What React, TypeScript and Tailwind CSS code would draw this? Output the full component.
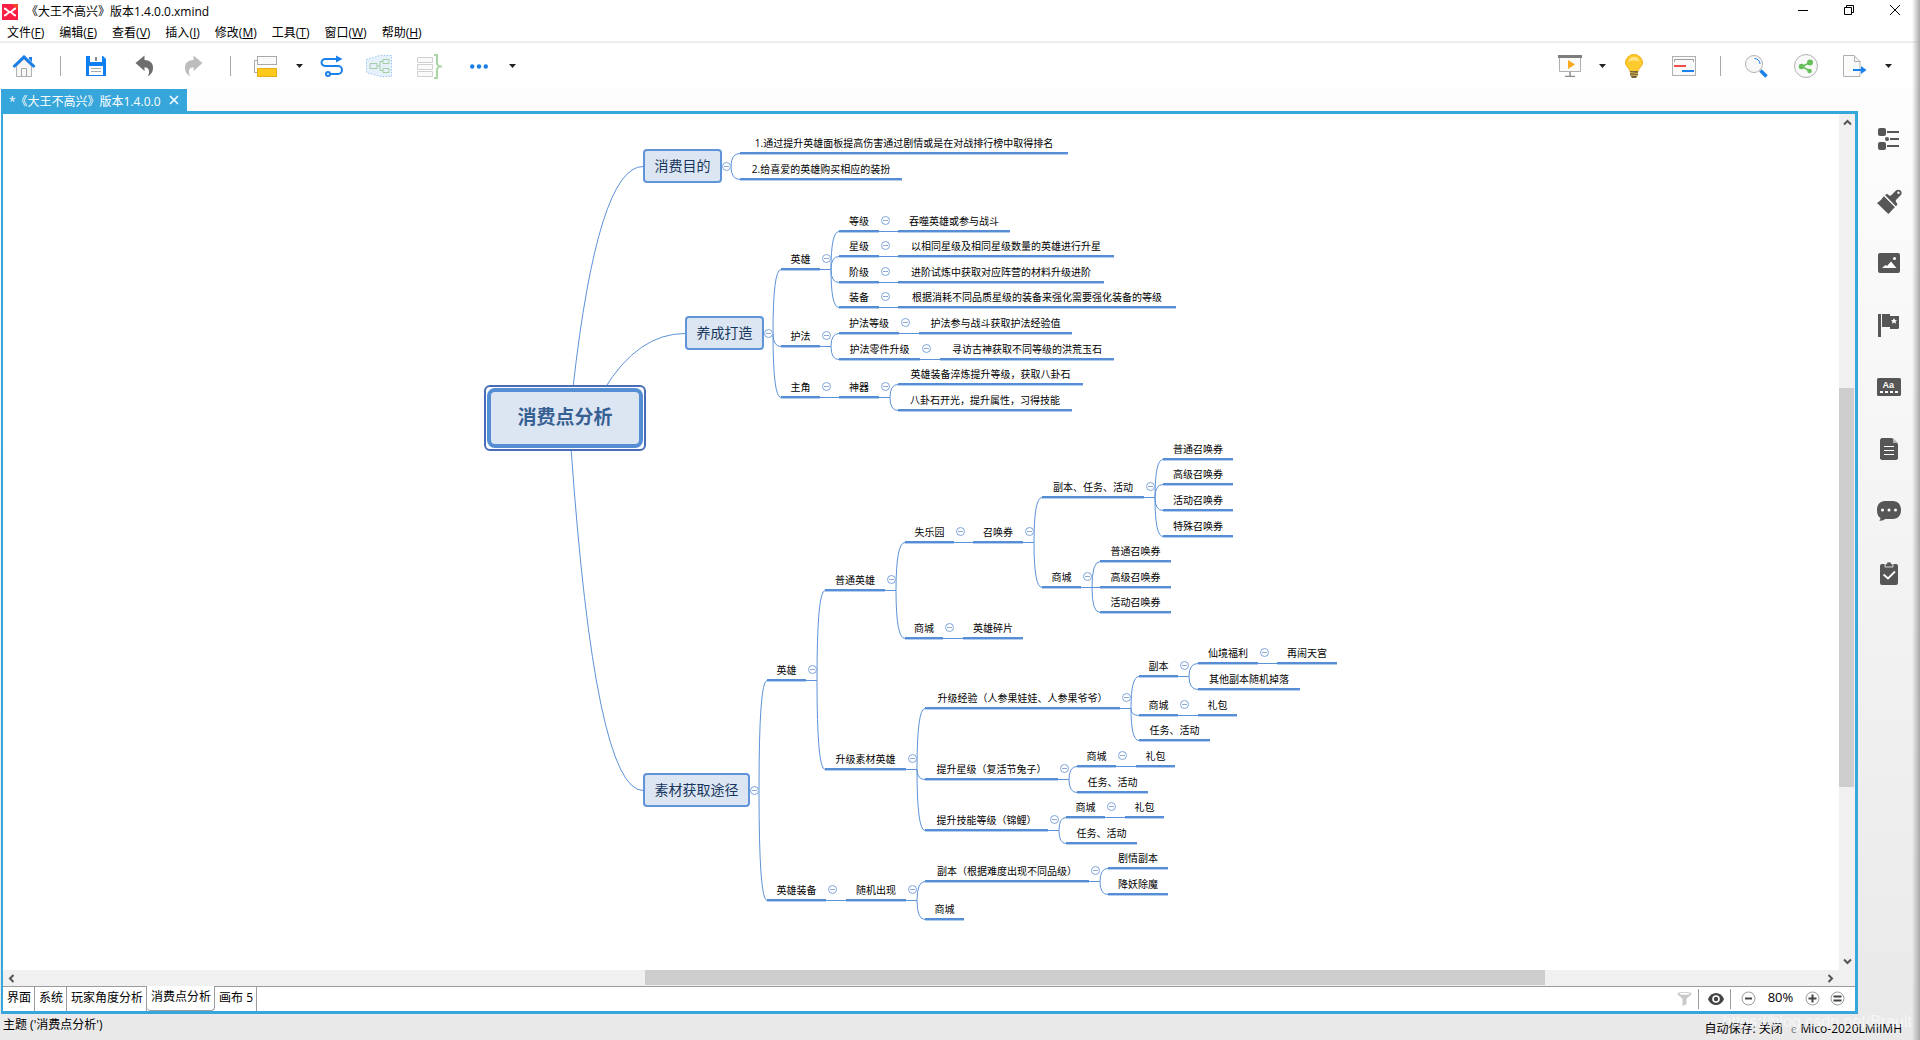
import React from "react";

type Topic = {
  text: string;
  /** left and right end of the underline, and its height on the sheet */
  x: number;
  r: number;
  y: number;
  kids?: Topic[];
};

const t = (text: string, x: number, r: number, y: number, kids?: Topic[]): Topic => ({ text, x, r, y, kids });

/** Sheet coordinate shown at the top left corner of the viewport. */
const ORIGIN = { x: 3, y: 115 };
const MAIN_HALF = 17;

const mains: Topic[] = [
  t("消费目的", 643, 722, 167, [
    t("1.通过提升英雄面板提高伤害通过剧情或是在对战排行榜中取得排名", 740, 1068, 154),
    t("2.给喜爱的英雄购买相应的装扮", 740, 902, 180),
  ]),
  t("养成打造", 685, 764, 334, [
    t("英雄", 781, 820, 270, [
      t("等级", 839, 879, 232, [t("吞噬英雄或参与战斗", 898, 1010, 232)]),
      t("星级", 839, 879, 257, [t("以相同星级及相同星级数量的英雄进行升星", 898, 1114, 257)]),
      t("阶级", 839, 879, 283, [t("进阶试炼中获取对应阵营的材料升级进阶", 898, 1104, 283)]),
      t("装备", 839, 879, 308, [t("根据消耗不同品质星级的装备来强化需要强化装备的等级", 898, 1176, 308)]),
    ]),
    t("护法", 781, 820, 347, [
      t("护法等级", 839, 899, 334, [t("护法参与战斗获取护法经验值", 919, 1072, 334)]),
      t("护法零件升级", 839, 920, 360, [t("寻访古神获取不同等级的洪荒玉石", 940, 1114, 360)]),
    ]),
    t("主角", 781, 820, 398, [
      t("神器", 839, 879, 398, [
        t("英雄装备淬炼提升等级，获取八卦石", 898, 1083, 385),
        t("八卦石开光，提升属性，习得技能", 898, 1072, 411),
      ]),
    ]),
  ]),
  t("素材获取途径", 643, 750, 791, [
    t("英雄", 767, 806, 681, [
      t("普通英雄", 825, 885, 591, [
        t("失乐园", 905, 954, 543, [
          t("召唤券", 973, 1023, 543, [
            t("副本、任务、活动", 1042, 1144, 498, [
              t("普通召唤券", 1163, 1233, 460),
              t("高级召唤券", 1163, 1233, 485),
              t("活动召唤券", 1163, 1233, 511),
              t("特殊召唤券", 1163, 1233, 537),
            ]),
            t("商城", 1042, 1081, 588, [
              t("普通召唤券", 1100, 1171, 562),
              t("高级召唤券", 1100, 1171, 588),
              t("活动召唤券", 1100, 1171, 613),
            ]),
          ]),
        ]),
        t("商城", 905, 943, 639, [t("英雄碎片", 963, 1023, 639)]),
      ]),
      t("升级素材英雄", 825, 906, 770, [
        t("升级经验（人参果娃娃、人参果爷爷）", 925, 1120, 709, [
          t("副本", 1139, 1178, 677, [
            t("仙境福利", 1198, 1258, 664, [t("再闹天宫", 1277, 1337, 664)]),
            t("其他副本随机掉落", 1198, 1300, 690),
          ]),
          t("商城", 1139, 1178, 716, [t("礼包", 1198, 1237, 716)]),
          t("任务、活动", 1139, 1210, 741),
        ]),
        t("提升星级（复活节兔子）", 925, 1058, 780, [
          t("商城", 1077, 1116, 767, [t("礼包", 1136, 1175, 767)]),
          t("任务、活动", 1077, 1148, 793),
        ]),
        t("提升技能等级（锦鲤）", 925, 1048, 831, [
          t("商城", 1066, 1105, 818, [t("礼包", 1125, 1164, 818)]),
          t("任务、活动", 1066, 1137, 844),
        ]),
      ]),
    ]),
    t("英雄装备", 767, 826, 901, [
      t("随机出现", 846, 906, 901, [
        t("副本（根据难度出现不同品级）", 925, 1089, 882, [
          t("剧情副本", 1108, 1168, 869),
          t("降妖除魔", 1108, 1168, 895),
        ]),
        t("商城", 925, 964, 920),
      ]),
    ]),
  ]),
];

function linksOf(topic: Topic, main: boolean): string[] {
  const kids = topic.kids ?? [];
  if (!kids.length) return [];
  const spine = topic.r + (main ? 9 : 11);
  const out: string[] = [];
  if (!main) out.push(`M${topic.r} ${topic.y}H${spine}`);
  for (const k of kids) {
    out.push(
      k.y === topic.y
        ? `M${spine} ${topic.y}H${k.x}`
        : `M${spine} ${topic.y}Q${spine} ${k.y} ${k.x} ${k.y}`
    );
    out.push(...linksOf(k, false));
  }
  return out;
}

const flatten = (list: Topic[]): Topic[] => list.flatMap((n) => [n, ...flatten(n.kids ?? [])]);

function Toggle({ cx, cy }: { cx: number; cy: number }) {
  return (
    <button
      aria-label="折叠"
      className="absolute size-[9px] rounded-full border border-[#7fa6de] bg-white flex items-center justify-center"
      style={{ left: cx - 4 - ORIGIN.x, top: cy - 4 - ORIGIN.y }}
    >
      <span className="h-px w-[5px] bg-[#8fa9d6]" />
    </button>
  );
}

function MindMap() {
  const subs = flatten(mains.flatMap((m) => m.kids ?? []));
  const paths = mains.flatMap((m) => linksOf(m, true)).join("");
  return (
    <div className="relative min-w-0 flex-1 overflow-hidden bg-white">
      <svg
        className="absolute left-0 top-0"
        width="1440"
        height="856"
        viewBox={`${ORIGIN.x} ${ORIGIN.y - 0.5} 1440 856`}
        fill="none"
        stroke="#5c92d9"
      >
        <path d={paths} />
        <path d="M573 388Q598 167 643 167M604 390Q638 334 685 334M571 448Q595 791 643 791" />
      </svg>

      <div
        className="absolute h-[66px] w-[162px] rounded-md border-2 border-[#4a6cb8] bg-white p-px"
        style={{ left: 484 - ORIGIN.x, top: 386 - ORIGIN.y }}
      >
        <div className="flex h-full items-center justify-center rounded-lg border-4 border-[#558ed5] bg-[#dce6f2] text-[19px] font-bold text-[#376092]">
          消费点分析
        </div>
      </div>

      {mains.map((m) => (
        <React.Fragment key={m.text}>
          <div
            className="absolute flex h-[34px] items-center justify-center whitespace-nowrap rounded border-2 border-[#5f95d8] bg-[#dce6f2] text-sm text-[#17375e]"
            style={{ left: m.x - ORIGIN.x, top: m.y - MAIN_HALF - ORIGIN.y, width: m.r - m.x }}
          >
            {m.text}
          </div>
          <Toggle cx={m.r + 4} cy={m.y} />
        </React.Fragment>
      ))}

      {subs.map((n) => (
        <React.Fragment key={`${n.x}-${n.y}`}>
          <div
            className="absolute flex h-5 items-center justify-center whitespace-nowrap border-b-2 border-[#558ed5] text-[10px] leading-[18px] text-black shadow-[0_1px_#b4cdef]"
            style={{ left: n.x - ORIGIN.x, top: n.y - 19 - ORIGIN.y, width: n.r - n.x }}
          >
            {n.text}
          </div>
          {n.kids && <Toggle cx={n.r + 6} cy={n.y - 11} />}
        </React.Fragment>
      ))}
    </div>
  );
}

/* ---------- toolbar icons ---------- */

const HomeIcon = () => (
  <svg width="24" height="22" viewBox="0 0 24 22" fill="none">
    <path d="M4.5 11v10.5h15V11L12 4z" fill="#f7f7f7" stroke="#b0b0b0" />
    <path d="M9.500 21.500v-8h5v8" stroke="#a6a6a6" />
    <path d="M17 2h3v5l-3-3z" fill="#1a7ee8" />
    <path d="M1.500 12L12 2l10.500 10" stroke="#1a7ee8" strokeWidth="3" />
  </svg>
);
const SaveIcon = () => (
  <svg width="20" height="20" viewBox="0 0 20 20">
    <path d="M0 0h17l3 3v17H0z" fill="#0d7ff2" />
    <path d="M4 0h12v6H4z" fill="#fff" />
    <path d="M9 1h2v4H9z" fill="#8a8a8a" />
    <path d="M3 10h14v9H3z" fill="#fff" />
    <path d="M5 12.500h10M5 15.500h10" stroke="#a8a8a8" />
  </svg>
);
const UndoIcon = ({ redo = false }: { redo?: boolean }) => (
  <svg width="19" height="22" viewBox="0 0 19 22" className={redo ? "-scale-x-100" : ""}>
    <path
      d="M0.500 8L9.500 0.500V5C16 5.300 18.500 9 18 14c-.4 3.500-2.500 6-5.500 7.500 1.500-2 2-4.500 1.300-6.500-.7-2-2-2.800-4.300-2.800V16z"
      fill={redo ? "#bdbdbd" : "#6e6e6e"}
    />
  </svg>
);
const TopicIcon = () => (
  <svg width="23" height="21" viewBox="0 0 23 21" fill="none">
    <path d="M3.500 4.500h-3v12h3" stroke="#a8a8a8" />
    <rect x="3.500" y=".5" width="19" height="8" fill="#fafafa" stroke="#a8a8a8" />
    <rect x="3.500" y="12.500" width="19" height="8" fill="#fdc91a" stroke="#e8ad1a" />
  </svg>
);
const RelationIcon = () => (
  <svg width="23" height="22" viewBox="0 0 23 22" fill="none" stroke="#1a80ea" strokeWidth="2">
    <path d="M17 4H5.500a4 3.500 0 0 0 0 7H18a3.500 3.500 0 0 1 0 8h-8" />
    <path d="M16 .5L22.500 4 16 7.500z" fill="#1a80ea" stroke="none" />
    <circle cx="8" cy="19" r="2" />
  </svg>
);
const BoundaryIcon = () => (
  <svg width="26" height="22" viewBox="0 0 26 22" fill="none">
    <path d="M.5 4.500L14 .5h11.500v21H14L.5 17.500z" fill="#e6f1fb" stroke="#9cc7ef" strokeDasharray="1.500 1.500" />
    <path d="M4 8.500h7v5H4zM11 11h3M17 6.500h-3v9h3" stroke="#a5cfa3" />
    <path d="M17 4.500h6v4h-6zM17 13.500h6v4h-6z" stroke="#a5cfa3" />
  </svg>
);
const SummaryIcon = () => (
  <svg width="25" height="25" viewBox="0 0 25 25" fill="none">
    <path d="M.5 3.500h15v5H.5zM.5 10.500h15v5H.5zM.5 17.500h15v5H.5z" fill="#fafafa" stroke="#d0d0d0" />
    <path d="M17 1h3v9l2 2.500-2 2.500v9h-3M21 12.500h4" stroke="#a9d6a5" strokeWidth="2" />
  </svg>
);
const DotsIcon = () => (
  <svg width="18" height="5" viewBox="0 0 18 5" fill="#1a7ee8">
    <circle cx="2.200" cy="2.500" r="2.200" />
    <circle cx="9" cy="2.500" r="2.200" />
    <circle cx="15.800" cy="2.500" r="2.200" />
  </svg>
);
const Caret = () => (
  <svg width="7" height="4" viewBox="0 0 7 4">
    <path d="M0 0h7L3.500 4z" fill="#222" />
  </svg>
);
const PresentIcon = () => (
  <svg width="24" height="22" viewBox="0 0 24 22" fill="none">
    <path d="M1.500 3v13.500h21V3" fill="#fafafa" stroke="#b0b0b0" />
    <path d="M0 0h24v3H0z" fill="#7d7d7d" />
    <path d="M10 5l7 4.500-7 4.500z" fill="#fba91f" />
    <path d="M12 17v4M7 21.500h10" stroke="#8a8a8a" strokeWidth="1.500" />
  </svg>
);
const BulbIcon = () => (
  <svg width="18" height="24" viewBox="0 0 18 24">
    <path d="M9 .5a8.500 8.500 0 0 0-8.500 8.500C.5 12.500 5 14 5 17.500h8C13 14 17.500 12.500 17.500 9A8.500 8.500 0 0 0 9 .5z" fill="#fdcb2e" stroke="#efae12" />
    <path d="M3.500 8A5.500 5.500 0 0 1 9 3a5.500 5.500 0 0 1 5.500 5C12 6 6 6 3.500 8z" fill="#fee48a" />
    <path d="M5 17h8v4l-2 3H7l-2-3z" fill="#75653c" />
    <path d="M5 18.500l8 1M5 21l8 .5" stroke="#d8b34c" />
  </svg>
);
const GanttIcon = () => (
  <svg width="24" height="20" viewBox="0 0 24 20" fill="none">
    <rect x=".5" y=".5" width="23" height="19" fill="#fafafa" stroke="#b0b0b0" />
    <path d="M2.500 6V3.500h19V6" stroke="#a0a0a0" />
    <path d="M2 10h12" stroke="#f24b4b" strokeWidth="2" />
    <path d="M10 15h12" stroke="#1a80ea" strokeWidth="2" />
  </svg>
);
const SearchIcon = () => (
  <svg width="23" height="23" viewBox="0 0 23 23" fill="none">
    <circle cx="9" cy="9" r="8.500" fill="#f8f8f8" stroke="#b0b0b0" />
    <path d="M9.500 3.500a5.500 5.500 0 0 1 5.500 5.500" stroke="#1a80ea" />
    <path d="M15.500 15.500l6 6" stroke="#1a80ea" strokeWidth="3.500" />
  </svg>
);
const ShareIcon = () => (
  <svg width="24" height="24" viewBox="0 0 24 24" fill="#66bf5b">
    <circle cx="12" cy="12" r="11.500" fill="#f9f9f9" stroke="#b0b0b0" />
    <path d="M16 8.500L8 12.500l8 4.500" fill="none" stroke="#66bf5b" strokeWidth="1.500" />
    <circle cx="16" cy="8.500" r="3" />
    <circle cx="7.500" cy="12.500" r="2.800" />
    <circle cx="15.500" cy="17" r="2.300" />
  </svg>
);
const ExportIcon = () => (
  <svg width="24" height="22" viewBox="0 0 24 22" fill="none">
    <path d="M.5.5H11l6 6v15H.5z" fill="#fafafa" stroke="#b0b0b0" />
    <path d="M11.500.5v6h6" stroke="#b0b0b0" />
    <path d="M10 15h9" stroke="#1a80ea" strokeWidth="2" />
    <path d="M18 11l5.500 4-5.500 4z" fill="#1a80ea" />
  </svg>
);

/* ---------- side panel icons ---------- */

const sideIcons: { label: string; icon: React.ReactNode }[] = [
  {
    label: "大纲",
    icon: (
      <svg width="22" height="22" viewBox="0 0 22 22">
        <rect width="8" height="8" rx="2" />
        <rect y="14" width="8" height="8" rx="2" />
        <circle cx="9" cy="11" r="2" />
        <path d="M9 3h12v2H9zM12 10h9v2h-9zM9 17h12v2H9z" />
      </svg>
    ),
  },
  {
    label: "格式",
    icon: (
      <svg width="25" height="25" viewBox="0 0 25 25">
        <path d="M8 6l2-1.200 2.500 2 1.500-.3 5-5C21-.5 26 1 24.300 5.500L19 11l-.3 1.500 1.800 2.500-1.500 2.500z" />
        <circle cx="21.500" cy="3.800" r="1.200" fill="#fff" />
        <path d="M7 7l11 11-6.500 7C10 23.500 2 16 0 14c3-2 5-4 7-7z" />
        <path d="M7 6.500l11.500 11.500" stroke="#fff" />
      </svg>
    ),
  },
  {
    label: "图片",
    icon: (
      <svg width="22" height="20" viewBox="0 0 22 20">
        <rect width="22" height="20" rx="2" />
        <path d="M4 15l3.500-3 1.500 1 4-4.500 5.500 6.500z" fill="#fff" />
        <circle cx="16.500" cy="5.500" r="1.500" fill="#fff" />
      </svg>
    ),
  },
  {
    label: "标记",
    icon: (
      <svg width="22" height="23" viewBox="0 0 22 23">
        <path d="M0 0h3v23H0zM4 0h8v2h9v12l-1 1h-8v-2H4z" />
        <path d="M16 4l1 2 2 .2-1.500 1.400.5 2.100-2-1.100-2 1.100.5-2.100L13 6.200l2-.2z" fill="#fff" />
      </svg>
    ),
  },
  {
    label: "标签",
    icon: (
      <svg width="24" height="18" viewBox="0 0 24 18">
        <rect width="24" height="18" rx="1.500" />
        <text x="5.500" y="9.500" fontSize="9" fontFamily="Liberation Sans, sans-serif" fontWeight="bold" fill="#fff">
          Aa
        </text>
        <path d="M3 14h18" stroke="#fff" strokeWidth="2" strokeDasharray="3 2" />
      </svg>
    ),
  },
  {
    label: "备注",
    icon: (
      <svg width="18" height="22" viewBox="0 0 18 22">
        <path d="M1.500 0H12l6 6v14.500L16.500 22h-15L0 20.500v-19z" />
        <path d="M13 0l5 5h-5z" fill="#b5b5b5" />
        <path d="M4 8.500h10M4 12.500h10M4 16.500h10" stroke="#fff" />
      </svg>
    ),
  },
  {
    label: "批注",
    icon: (
      <svg width="24" height="20" viewBox="0 0 24 20">
        <path d="M8 0h8c5 0 8 3.500 8 9s-3 9-8 9H8c-1 1.200-3.500 2-6 1.500 1-.5 1.500-1.500 1.500-2.500C1 15.500 0 13 0 9c0-5.500 3-9 8-9z" />
        <g fill="#fff">
          <circle cx="5.500" cy="9" r="1.500" />
          <circle cx="12" cy="9" r="1.500" />
          <circle cx="18.500" cy="9" r="1.500" />
        </g>
      </svg>
    ),
  },
  {
    label: "任务信息",
    icon: (
      <svg width="18" height="23" viewBox="0 0 18 23">
        <rect y="2" width="18" height="21" rx="2" />
        <path d="M5 2h1.500L7 0h4l.5 2H13v3H5z" stroke="#f7f7f7" strokeWidth=".8" />
        <path d="M3.500 12.500l4.500 4 7-7" fill="none" stroke="#fff" strokeWidth="1.800" />
      </svg>
    ),
  },
];

const Tool = ({ label, className, children }: { label: string; className: string; children: React.ReactNode }) => (
  <button aria-label={label} className={`flex h-full shrink-0 items-center justify-center ${className}`}>
    {children}
  </button>
);
const Divider = ({ className }: { className: string }) => (
  <span className={`flex shrink-0 justify-center ${className}`}>
    <span className="h-5 w-px bg-[#a9a9a9]" />
  </span>
);

const menus = [
  ["文件", "F"],
  ["编辑", "E"],
  ["查看", "V"],
  ["插入", "I"],
  ["修改", "M"],
  ["工具", "T"],
  ["窗口", "W"],
  ["帮助", "H"],
];
const sheets = ["界面", "系统", "玩家角度分析", "消费点分析", "画布 5"];

const Chevron = ({ d }: { d: string }) => (
  <svg width="9" height="9" viewBox="0 0 9 9" fill="none" stroke="#555" strokeWidth="2">
    <path d={d} />
  </svg>
);

const Zoomer = ({ label, d }: { label: string; d: string }) => (
  <button aria-label={label}>
    <svg width="15" height="15" viewBox="0 0 15 15" fill="none">
      <circle cx="7.500" cy="7.500" r="6.500" fill="#fff" stroke="#9d9d9d" />
      <path d={d} stroke="#444" strokeWidth="2" />
    </svg>
  </button>
);

export default function App() {
  return (
    <div className="relative flex h-screen flex-col overflow-hidden bg-white font-['Open_Sans','Noto_Sans_CJK_SC',sans-serif] text-xs text-black">
      <header className="flex h-6 shrink-0 items-center pl-0.5">
        <svg width="16" height="16" viewBox="0 0 16 16">
          <path d="M0 0h16v16H0z" fill="#fb1f46" />
          <path d="M10 0h6v6z" fill="#f04a25" />
          <path d="M2 4.500c3 0 3.500 3.500 6 3.500s3-3.500 6-3.500M2 11.500c3 0 3.500-3.500 6-3.500s3 3.500 6 3.500" fill="none" stroke="#fff" strokeWidth="2" />
        </svg>
        <h1 className="ml-2 flex-1">《大王不高兴》版本1.4.0.0.xmind</h1>
        <div className="mr-0.5 flex items-start">
          {[
            ["最小化", "M0 5.500h10"],
            ["还原", "M.5 2.500h7v7h-7zM2.500 2.500v-2h7v7h-2"],
            ["关闭", "M0 0l10 10M10 0L0 10"],
          ].map(([label, d]) => (
            <button key={label} aria-label={label} className="flex h-6 w-[46px] items-start justify-center pt-[5px]">
              <svg width="10" height="10" viewBox="0 0 10 10" fill="none" stroke="#000">
                <path d={d} />
              </svg>
            </button>
          ))}
        </div>
      </header>

      <nav className="flex h-[19px] shrink-0 items-center gap-[15px] border-b-2 border-[#eee] pl-[7px]">
        {menus.map(([name, key]) => (
          <button key={key} className="leading-4">
            {name}(<span className="underline">{key}</span>)
          </button>
        ))}
      </nav>

      <div className="flex h-[46px] shrink-0 items-center">
        <Tool label="主页" className="w-12"><HomeIcon /></Tool>
        <Divider className="w-6" />
        <Tool label="保存" className="w-12"><SaveIcon /></Tool>
        <Tool label="撤销" className="w-12"><UndoIcon /></Tool>
        <Tool label="重做" className="w-[50px]"><UndoIcon redo /></Tool>
        <Divider className="w-6" />
        <Tool label="子主题" className="w-[47px]"><TopicIcon /></Tool>
        <Tool label="更多主题" className="w-5"><Caret /></Tool>
        <Tool label="联系" className="w-11"><RelationIcon /></Tool>
        <Tool label="外框" className="w-[52px]"><BoundaryIcon /></Tool>
        <Tool label="概要" className="w-12"><SummaryIcon /></Tool>
        <Tool label="更多" className="w-[52px]"><DotsIcon /></Tool>
        <Tool label="更多选项" className="w-3.5"><Caret /></Tool>
        <div className="flex-1" />
        <Tool label="演示" className="w-12"><PresentIcon /></Tool>
        <Tool label="演示选项" className="w-4"><Caret /></Tool>
        <Tool label="头脑风暴" className="w-12"><BulbIcon /></Tool>
        <Tool label="甘特图" className="w-[52px]"><GanttIcon /></Tool>
        <Divider className="w-5" />
        <Tool label="搜索" className="w-[52px]"><SearchIcon /></Tool>
        <Tool label="分享" className="w-12"><ShareIcon /></Tool>
        <Tool label="导出" className="w-[50px]"><ExportIcon /></Tool>
        <Tool label="导出选项" className="mr-6 w-4"><Caret /></Tool>
      </div>

      <div className="flex min-h-0 flex-1 flex-col bg-linear-to-b from-[#fdfdfd] to-[#e9e9e9]">
        <div className="flex min-h-0 flex-1">
          <main className="ml-px flex min-w-0 flex-1 flex-col">
            <div className="flex h-[22px] shrink-0">
              <div className="flex items-center gap-2 bg-[#37a6da] px-2 text-white">
                <span className="pt-[3px] leading-4">*《大王不高兴》版本1.4.0.0</span>
                <button aria-label="关闭标签">
                  <svg width="10" height="10" viewBox="0 0 10 10" stroke="#fff" strokeWidth="1.500">
                    <path d="M1 1l8 8M9 1L1 9" />
                  </svg>
                </button>
              </div>
            </div>
            <div className="flex min-h-0 flex-1 flex-col border-2 border-y-3 border-r-3 border-[#37a6da] bg-white">
              <div className="flex min-h-0 flex-1">
                <MindMap />
                <div className="flex w-4 shrink-0 flex-col items-center bg-[#f0f0f0]">
                  <button aria-label="向上滚动" className="flex h-[17px] items-center"><Chevron d="M1 6.500l3.500-3.500L8 6.500" /></button>
                  <div className="flex w-full flex-1 flex-col pr-px">
                    <div className="flex-[257]" />
                    <div className="flex-[399] bg-[#cdcdcd]" />
                    <div className="flex-[166]" />
                  </div>
                  <button aria-label="向下滚动" className="flex h-[17px] items-center"><Chevron d="M1 2.500l3.500 3.500L8 2.500" /></button>
                </div>
              </div>
              <div className="flex h-4 shrink-0 items-center bg-[#f0f0f0] pr-4">
                <button aria-label="向左滚动" className="flex w-[17px] justify-center"><Chevron d="M6.500 1L3 4.500 6.500 8" /></button>
                <div className="flex h-full flex-1 pb-px">
                  <div className="flex-[625]" />
                  <div className="flex-[900] bg-[#cdcdcd]" />
                  <div className="flex-[277]" />
                </div>
                <button aria-label="向右滚动" className="flex w-[17px] justify-center"><Chevron d="M2.500 1L6 4.500 2.500 8" /></button>
              </div>
              <div className="flex h-[25px] shrink-0">
                <div className="flex" role="tablist">
                  {sheets.map((s) => {
                    const active = s === "消费点分析";
                    return (
                      <button
                        key={s}
                        role="tab"
                        aria-selected={active}
                        className={`whitespace-nowrap border-r border-[#9c9c9c] pl-1 pr-[3px] ${
                          active ? "rounded-b-sm border-b pb-0.5" : "border-t pb-[3px]"
                        }`}
                      >
                        {s}
                      </button>
                    );
                  })}
                </div>
                <div className="flex flex-1 items-center justify-end border-t border-[#9c9c9c] pb-px pr-[10px]">
                  <button aria-label="筛选">
                    <svg width="15" height="15" viewBox="0 0 15 15">
                      <path d="M.5 2.500C.5.500 14.500.5 14.500 2.500 14.500 4 9.500 7 9.500 8v5l-4 2V8C5.500 7 .5 4 .5 2.500z" fill="#c9c9c9" />
                      <ellipse cx="7.500" cy="2.800" rx="5" ry="1" fill="#fff" />
                    </svg>
                  </button>
                  <span className="ml-1.5 h-5 w-px bg-[#9c9c9c]" />
                  <button aria-label="显示" className="ml-[9px] mr-1.5">
                    <svg width="16" height="12" viewBox="0 0 16 12">
                      <path d="M0 6C3-2 13-2 16 6 13 14 3 14 0 6z" fill="#444" />
                      <circle cx="8" cy="6" r="3.800" fill="#fff" />
                      <circle cx="8" cy="6" r="2.200" fill="#444" />
                    </svg>
                  </button>
                  <span className="mr-[10px] h-5 w-px bg-[#9c9c9c]" />
                  <Zoomer label="缩小" d="M4 7.500h7" />
                  <span className="w-[49px] pb-px text-center text-[13px]">80%</span>
                  <Zoomer label="放大" d="M3.500 7.500h8M7.500 3.500v8" />
                  <span className="w-[10px]" />
                  <Zoomer label="适应大小" d="M3.500 5.500h8M3.500 9.500h8" />
                </div>
              </div>
            </div>
          </main>

          <aside className="flex w-[62px] shrink-0 flex-col items-center pt-[35px]">
            {sideIcons.map(({ label, icon }) => (
              <button
                key={label}
                aria-label={label}
                className="flex h-[62px] w-[62px] items-start justify-center fill-[#565656] pt-0.5"
              >
                <span className="flex h-[26px] items-center">{icon}</span>
              </button>
            ))}
          </aside>
        </div>

        <footer className="relative flex h-[26px] shrink-0 items-center pb-1 pl-[3px]">
          <span className="flex-1 leading-4">主题 ('消费点分析')</span>
          <span className="mt-[7px] leading-4">自动保存: 关闭</span>
          <span className="ml-2 mt-[7px] text-[10px] leading-4 text-[#777]">e</span>
          <span className="ml-1 mr-[18px] mt-[7px] leading-4">Mico-2020LMIIMH</span>
          <span className="pointer-events-none absolute right-2 top-0 font-['Liberation_Sans',sans-serif] text-base leading-4 text-white/60">
            https://blog.csdn.net/Brault
          </span>
        </footer>
      </div>
      <div className="pointer-events-none absolute inset-y-0 right-0 w-2 bg-linear-to-r from-transparent to-[#a8a8a8]" />
    </div>
  );
}
